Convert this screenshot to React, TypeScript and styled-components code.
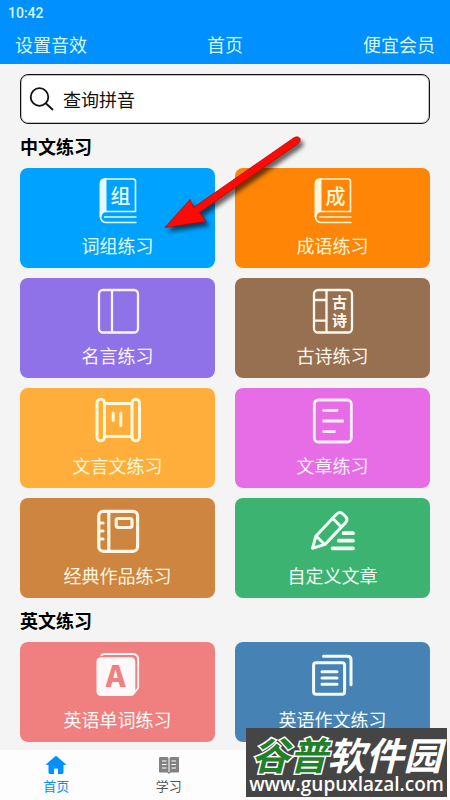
import React from "react";
import styled, { createGlobalStyle } from "styled-components";

const CJK = '"Noto Sans CJK SC", sans-serif';

const GlobalStyle = createGlobalStyle`
  * { box-sizing: border-box; }
  body { margin: 0; background: #f4f4f4; font-family: ${CJK}; }
  button, input { font-family: inherit; }
`;

const Screen = styled.div`
  position: relative;
  display: flex;
  flex-direction: column;
  height: 100dvh;
  overflow: hidden;
`;

const StatusBar = styled.div`
  padding: 0 8px;
  background: #0090ff;
  color: #d8f7ff;
  font: 500 14px/26px Roboto, sans-serif;
`;

const TopBar = styled.header`
  display: grid;
  grid-template-columns: 1fr auto 1fr;
  align-items: center;
  height: 38px;
  padding: 0 15px 2px;
  background: #0090ff;
  color: #d8f7ff;
`;

const TopTitle = styled.h1`
  margin: 0;
  font-size: 18px;
  font-weight: 400;
  line-height: 36px;
`;

const TopAction = styled.button<{ $end?: boolean }>`
  justify-self: ${(p) => (p.$end ? "end" : "start")};
  padding: 0;
  border: 0;
  background: none;
  color: inherit;
  font-size: 18px;
  line-height: 36px;
  cursor: pointer;
`;

const Content = styled.main`
  position: relative;
  flex: 1;
  min-height: 0;
  padding: 10px 20px 7px;
  overflow-y: auto;
  scrollbar-width: none;
`;

const SearchField = styled.label`
  display: flex;
  align-items: center;
  gap: 8px;
  height: 50px;
  padding: 0 8px;
  border: 1px solid #111;
  border-radius: 8px;
  background: #fff;
  box-shadow: inset 0 0 0 1px #8888;
`;

const SearchInput = styled.input`
  flex: 1;
  min-width: 0;
  padding: 0;
  border: 0;
  outline: 0;
  background: none;
  color: #111;
  font-size: 18px;
  &::placeholder { color: #111; opacity: 1; }
`;

const SectionTitle = styled.h2`
  margin: 0;
  color: #000;
  font-size: 18px;
  font-weight: 700;
  line-height: 44px;
`;

const CardGrid = styled.div`
  display: grid;
  grid-template-columns: 1fr 1fr;
  gap: 10px 20px;
`;

const Card = styled.button<{ $color: string; $ink: string }>`
  display: flex;
  flex-direction: column;
  align-items: center;
  gap: 7px;
  height: 100px;
  padding: 8px 0 9px;
  border: 0;
  border-radius: 8px;
  background: ${(p) => p.$color};
  color: ${(p) => p.$ink};
  font-size: 18px;
  line-height: 28px;
  cursor: pointer;
`;

const CardIcon = styled.svg`
  flex: none;
  width: 48px;
  height: 48px;
  fill: none;
  stroke: currentColor;
  text {
    fill: currentColor;
    stroke: none;
    text-anchor: middle;
    font-family: ${CJK};
  }
`;

const LetterIcon = styled(CardIcon)`
  text { fill: #f08080; }
`;

const TabBar = styled.nav`
  display: grid;
  grid-template-columns: repeat(4, 1fr);
  height: 50px;
  background: #fdfdfd;
`;

const Tab = styled.button<{ $active?: boolean }>`
  display: flex;
  flex-direction: column;
  align-items: center;
  gap: 2px;
  padding: 5px 0 0;
  border: 0;
  background: none;
  color: ${(p) => (p.$active ? "#0090ff" : "#555")};
  font-size: 13px;
  line-height: 18px;
  cursor: pointer;
`;

const Pointer = styled.svg`
  position: absolute;
  top: 66px;
  left: 155px;
  pointer-events: none;
  filter: drop-shadow(3px 4px 2px rgba(0, 0, 0, 0.6));
`;

const Watermark = styled.aside`
  position: absolute;
  right: 3px;
  bottom: 3px;
  display: flex;
  flex-direction: column;
  align-items: center;
  width: 201px;
  height: 69px;
  padding-top: 6px;
  background: #454545;
  color: #fff;
  pointer-events: none;
`;

const WatermarkName = styled.span`
  font-size: 38px;
  font-style: italic;
  font-weight: 700;
  line-height: 40px;
  white-space: nowrap;
`;

const WatermarkAccent = styled.span`
  color: #21812b;
  -webkit-text-stroke: 3px #fff;
  paint-order: stroke fill;
`;

const WatermarkUrl = styled.span`
  font: 600 19px/20px "Open Sans", sans-serif;
  white-space: nowrap;
`;

const LabeledBook = ({ char }: { char: string }) => (
  <>
    <path d="M5.5 41V8Q5.5 2 11.5 2H12.5V35Q7.5 36 7.5 41Z" fill="currentColor" stroke="none" />
    <path d="M11 3H39a2.5 2.5 0 0 1 2.5 2.5V35.5H12a5.5 5.5 0 0 0 0 11H42.5M10 41H42.5" strokeWidth="1.6" />
    <text x="26.5" y="28" fontSize="20" fontWeight="500">{char}</text>
  </>
);

const icons = {
  phrase: <LabeledBook char="组" />,
  idiom: <LabeledBook char="成" />,
  quote: (
    <g strokeWidth="2.3">
      <rect x="5" y="4" width="39" height="42.5" rx="4" />
      <path d="M18 4V46.5" />
    </g>
  ),
  poem: (
    <>
      <g strokeWidth="2.3">
        <rect x="5" y="4" width="38" height="42.5" rx="4" />
        <path d="M17.5 4V46.5M5 14H17.5M5 34.7H17.5" />
      </g>
      <text x="30.5" y="21.5" fontSize="15" fontWeight="700">古</text>
      <text x="30.5" y="40" fontSize="15" fontWeight="700">诗</text>
    </>
  ),
  scroll: (
    <g strokeWidth="3" strokeLinecap="round">
      <rect x="3" y="3.2" width="7.5" height="41.6" rx="3.7" />
      <rect x="38" y="3.2" width="7.5" height="41.6" rx="3.7" />
      <path d="M10.5 7.5H38M10.5 40.5H38M19.2 17V24.5M26.8 17V29.5" />
    </g>
  ),
  article: (
    <g strokeWidth="2.8">
      <rect x="5.3" y="4" width="37" height="42" rx="4" />
      <path d="M13.5 14.3H29.2M13.5 25H34.8M13.5 35.7H26.5" />
    </g>
  ),
  notebook: (
    <g strokeWidth="3.2" strokeLinecap="round">
      <rect x="4.8" y="5.3" width="38.8" height="40" rx="4.5" />
      <path d="M14.8 5.3V45.3M5 17H9M5 25H9M5 33H9" />
      <rect x="22.2" y="12.5" width="15.8" height="9" rx="2" />
    </g>
  ),
  pencil: (
    <>
      <path
        d="M3.5 42.3L6.8 30.3L27.2 8.4Q30.7 4.7 34.2 8.2L36.8 10.8Q39.2 13.6 36.6 16.6L16 38.4ZM7.3 30.3L15.5 38.3M23.8 12.5L32 20.6"
        strokeWidth="3"
        strokeLinecap="round"
        strokeLinejoin="round"
      />
      <path d="M34.5 27.2H44M29.8 34.7H44M23.5 42.3H44" strokeWidth="3.8" strokeLinecap="round" />
    </>
  ),
  word: (
    <>
      <path d="M7 5.8Q8 4 11 4H38.5Q44.2 4 44.2 9.7V38L40.5 42.5" strokeWidth="1.8" />
      <rect x="2.5" y="7.3" width="38.8" height="38.7" rx="4.5" fill="currentColor" stroke="none" />
      <text x="21.7" y="36.5" fontSize="30" fontWeight="900">A</text>
    </>
  ),
  essay: (
    <g strokeWidth="3" strokeLinecap="round">
      <rect x="4.6" y="12.7" width="31" height="31.6" rx="2.5" />
      <path d="M14.5 6.3H38.5Q42 6.3 42 9.8V34.7M13 21.7H28M13 28H28M13 34.3H28" />
    </g>
  ),
};

type Entry = { label: string; color: string; ink: string; icon: keyof typeof icons };

const chinese: Entry[] = [
  { label: "词组练习", color: "#00a2ff", ink: "#e2fbff", icon: "phrase" },
  { label: "成语练习", color: "#ff8507", ink: "#fff5d8", icon: "idiom" },
  { label: "名言练习", color: "#8f71e8", ink: "#fbf2ff", icon: "quote" },
  { label: "古诗练习", color: "#976f51", ink: "#fff8ec", icon: "poem" },
  { label: "文言文练习", color: "#ffae3b", ink: "#fff8dc", icon: "scroll" },
  { label: "文章练习", color: "#e66de5", ink: "#fff0ff", icon: "article" },
  { label: "经典作品练习", color: "#cd853f", ink: "#fff5e0", icon: "notebook" },
  { label: "自定义文章", color: "#3cb371", ink: "#effff6", icon: "pencil" },
];

const english: Entry[] = [
  { label: "英语单词练习", color: "#f08080", ink: "#fff8f8", icon: "word" },
  { label: "英语作文练习", color: "#4682b4", ink: "#f2fcff", icon: "essay" },
];

const Cards = ({ entries }: { entries: Entry[] }) => (
  <CardGrid>
    {entries.map((e) => {
      const Icon = e.icon === "word" ? LetterIcon : CardIcon;
      return (
        <Card key={e.label} type="button" $color={e.color} $ink={e.ink}>
          <Icon viewBox="0 0 48 48" aria-hidden="true">{icons[e.icon]}</Icon>
          {e.label}
        </Card>
      );
    })}
  </CardGrid>
);

export default function App() {
  return (
    <>
      <GlobalStyle />
      <Screen>
        <StatusBar>10:42</StatusBar>
        <TopBar>
          <TopAction type="button">设置音效</TopAction>
          <TopTitle>首页</TopTitle>
          <TopAction type="button" $end>便宜会员</TopAction>
        </TopBar>
        <Content>
          <SearchField>
            <svg width="26" height="26" viewBox="0 0 26 26" fill="none" stroke="#111" strokeWidth="1.8" strokeLinecap="round" aria-hidden="true">
              <circle cx="10.5" cy="11" r="8.8" />
              <path d="M17 17.5L23.5 23.5" />
            </svg>
            <SearchInput type="search" placeholder="查询拼音" aria-label="查询拼音" />
          </SearchField>
          <SectionTitle>中文练习</SectionTitle>
          <Cards entries={chinese} />
          <SectionTitle>英文练习</SectionTitle>
          <Cards entries={english} />
          <Pointer width="160" height="110" viewBox="155 130 160 110" aria-hidden="true">
            <path d="M165 227.5L190 199.5L193.5 207.5L293.5 138Q298 135.5 300 138.5Q301 142 297.5 144L199.5 212.5L206 221.5Z" fill="#fb0a06" stroke="#c40000" strokeWidth="0.8" />
          </Pointer>
        </Content>
        <TabBar>
          <Tab type="button" $active>
            <svg width="20" height="20" viewBox="0 0 20 20" fill="currentColor" aria-hidden="true">
              <path d="M9 1.5Q10 .7 11 1.5L19.6 9Q20 10 19 10H17.5V17.5Q17.5 19 16 19H12V14.5Q12 13.5 11 13.5H9Q8 13.5 8 14.5V19H4Q2.5 19 2.5 17.5V10H1Q0 10 .4 9Z" />
            </svg>
            首页
          </Tab>
          <Tab type="button">
            <svg width="20" height="20" viewBox="0 0 20 20" fill="#828282" aria-hidden="true">
              <path d="M1 2H8Q9.500 2 9.500 3.500V17.500H1Q0 17.500 0 16.500V3Q0 2 1 2ZM19 2H12Q10.500 2 10.500 3.500V17.500H19Q20 17.500 20 16.500V3Q20 2 19 2Z" />
              <path d="M8 17H12L10 19Z" />
              <path d="M3 6H7.500M3 9.500H7.500M3 13H7.500M12.500 6H17M12.500 9.500H17M12.500 13H17" stroke="#fff" strokeWidth="1.2" />
            </svg>
            学习
          </Tab>
        </TabBar>
        <Watermark>
          <WatermarkName><WatermarkAccent>谷普</WatermarkAccent>软件园</WatermarkName>
          <WatermarkUrl>www.gupuxlazal.com</WatermarkUrl>
        </Watermark>
      </Screen>
    </>
  );
}
